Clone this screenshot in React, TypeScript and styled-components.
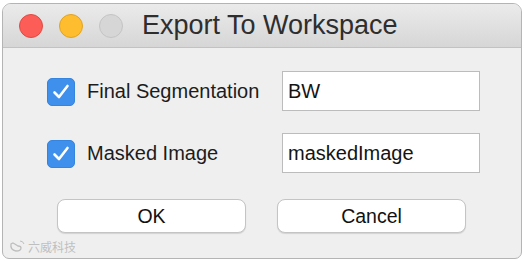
import React, { useState } from "react"
import styled, { createGlobalStyle } from "styled-components"

const Global = createGlobalStyle`
  html, body {
    margin: 0;
    padding: 0;
    background: #fff;
  }
  body {
    font-family: "Liberation Sans", Arial, "Noto Sans CJK SC", sans-serif;
  }
`

const Window = styled.div`
  box-sizing: border-box;
  margin: 3px 0 0 2px;
  width: 520px;
  height: 256px;
  border: 1px solid #b4b4b4;
  border-radius: 9px 9px 7px 7px;
  background: #efefef;
  overflow: hidden;
  display: flex;
  flex-direction: column;
  position: relative;
`

const TitleBar = styled.div`
  height: 43px;
  flex-shrink: 0;
  display: flex;
  align-items: center;
  padding-left: 16px;
  background: linear-gradient(#ebebeb, #d6d6d6);
  border-bottom: 1px solid #c2c2c2;
`

const Light = styled.span<{ $fill: string; $edge: string }>`
  box-sizing: border-box;
  width: 24px;
  height: 24px;
  border-radius: 50%;
  background: ${(p) => p.$fill};
  border: 1px solid ${(p) => p.$edge};
  margin-right: 16px;
`

const Title = styled.h1`
  margin: 0 0 0 3px;
  font-size: 27px;
  font-weight: normal;
  color: #2e2e2e;
`

const Body = styled.div`
  padding: 23px 0 0 44px;
  display: flex;
  flex-direction: column;
`

const Row = styled.div`
  height: 40px;
  display: flex;
  align-items: center;
  margin-bottom: 22px;
`

const CheckBox = styled.button<{ $on: boolean }>`
  box-sizing: border-box;
  width: 28px;
  height: 28px;
  padding: 0;
  border-radius: 5px;
  border: 1px solid ${(p) => (p.$on ? "#3584e0" : "#b0b0b0")};
  background: ${(p) => (p.$on ? "#3f8fec" : "#fff")};
  display: flex;
  align-items: center;
  justify-content: center;
  cursor: pointer;
  margin-top: 1px;
`

const Label = styled.span`
  margin-left: 12px;
  width: 195px;
  font-size: 20px;
  color: #1c1c1c;
`

const Field = styled.input`
  box-sizing: border-box;
  width: 198px;
  height: 40px;
  border: 1px solid #bcbcbc;
  background: #fff;
  padding: 0 5px;
  font-family: inherit;
  font-size: 20px;
  color: #141414;
  outline: none;
`

const Buttons = styled.div`
  display: flex;
  gap: 31px;
  padding-left: 10px;
  margin-top: 4px;
`

const Button = styled.button`
  box-sizing: border-box;
  width: 189px;
  height: 34px;
  border: 1px solid #c4c4c4;
  border-radius: 8px;
  background: #fff;
  box-shadow: 0 1px 1px rgba(0, 0, 0, 0.12);
  font-family: inherit;
  font-size: 19.5px;
  color: #111;
  padding: 0;
`

const Watermark = styled.div`
  position: absolute;
  left: 6px;
  bottom: 3px;
  display: flex;
  align-items: center;
  gap: 3px;
  font-size: 12px;
  color: rgba(170, 170, 170, 0.7);
  font-family: "Noto Sans CJK SC", sans-serif;
`

const Check = () => (
  <svg width="22" height="22" viewBox="0 0 22 22">
    <path d="M4.5 11.5 L9 16 L17.5 5" fill="none" stroke="#fff" strokeWidth="2.6" strokeLinecap="round" strokeLinejoin="round" />
  </svg>
)

const rows = [
  { label: "Final Segmentation", value: "BW" },
  { label: "Masked Image", value: "maskedImage" },
]

export default function App() {
  const [checked, setChecked] = useState([true, true])
  const [values, setValues] = useState(rows.map((r) => r.value))

  return (
    <>
      <Global />
      <Window>
        <TitleBar>
          <Light $fill="#fd5d57" $edge="#e04a43" />
          <Light $fill="#fdbd2e" $edge="#e2a321" />
          <Light $fill="#d6d6d6" $edge="#c4c4c4" />
          <Title>Export To Workspace</Title>
        </TitleBar>
        <Body>
          {rows.map((r, i) => (
            <Row key={r.label}>
              <CheckBox
                $on={checked[i]}
                onClick={() => setChecked((c) => c.map((v, j) => (j === i ? !v : v)))}
              >
                {checked[i] && <Check />}
              </CheckBox>
              <Label>{r.label}</Label>
              <Field
                value={values[i]}
                onChange={(e) => setValues((v) => v.map((x, j) => (j === i ? e.target.value : x)))}
              />
            </Row>
          ))}
          <Buttons>
            <Button>OK</Button>
            <Button>Cancel</Button>
          </Buttons>
        </Body>
        <Watermark>
          <svg width="16" height="13" viewBox="0 0 16 13">
            <path d="M2 4 Q1 10 7 11 Q12 11 12 8 Q12 6 9 6 Q6 4 4 3 Z" fill="none" stroke="currentColor" strokeWidth="1.3" />
            <path d="M11 1 Q14 1 15 4" fill="none" stroke="currentColor" strokeWidth="1" />
          </svg>
          <span>六威科技</span>
        </Watermark>
      </Window>
    </>
  )
}
